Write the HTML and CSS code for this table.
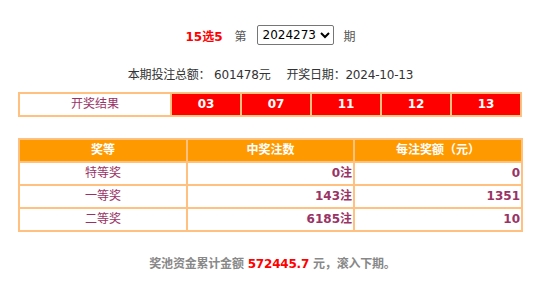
FILE: index.html
```html
<!DOCTYPE html>
<html>
<head>
<meta charset="utf-8">
<link rel="stylesheet" href="styles.css">
</head>
<body>
<div class="page">
  <div class="head">
    <span class="lot">15选5</span>
    <span class="di">第</span>
    <select class="issue"><option>2024273</option></select>
    <span class="di">期</span>
  </div>
  <div class="info">
    <span>本期投注总额： 601478元</span>
    <span>开奖日期：2024-10-13</span>
  </div>
  <div class="draw">
    <div class="label">开奖结果</div>
    <div class="ball">03</div>
    <div class="ball">07</div>
    <div class="ball">11</div>
    <div class="ball">12</div>
    <div class="ball">13</div>
  </div>
  <div class="prize">
    <div class="th">奖等</div>
    <div class="th">中奖注数</div>
    <div class="th">每注奖额（元）</div>
    <div class="td c">特等奖</div>
    <div class="td r">0注</div>
    <div class="td r">0</div>
    <div class="td c">一等奖</div>
    <div class="td r">143注</div>
    <div class="td r">1351</div>
    <div class="td c">二等奖</div>
    <div class="td r">6185注</div>
    <div class="td r">10</div>
  </div>
  <div class="pool">奖池资金累计金额 <span class="amt">572445.7</span> 元，滚入下期。</div>
</div>
</body>
</html>
```
FILE: styles.css
```css
html, body {
  margin: 0;
  padding: 0;
  background: #fff;
}
body {
  font-family: "DejaVu Sans", "Noto Sans CJK SC", sans-serif;
  font-size: 12px;
  color: #333;
}
.page {
  padding: 0 0 0 18px;
  width: 505px;
}
.head {
  display: flex;
  justify-content: center;
  align-items: center;
  gap: 8px;
  height: 20px;
  margin-top: 25px;
}
.lot {
  color: #ff0000;
  font-weight: bold;
  font-size: 12px;
  margin-right: 4px;
}
.di {
  color: #555;
}
.issue {
  font-family: "DejaVu Sans", sans-serif;
  font-size: 12px;
  color: #000;
  height: 20px;
  padding: 0 0 0 1px;
  border: 1px solid #767676;
  border-radius: 2px;
  background: #fff;
  margin: 0 2px;
}
.info {
  display: flex;
  justify-content: center;
  gap: 16px;
  margin-top: 22px;
  height: 16px;
  line-height: 16px;
  letter-spacing: -0.2px;
}
.draw {
  margin-top: 9px;
  display: grid;
  grid-template-columns: 150px repeat(5, 68px);
  grid-auto-rows: 21px;
  gap: 2px;
  padding: 2px;
  background: #ffc080;
  width: 500px;
}
.label {
  background: #fff;
  color: #993366;
  text-align: center;
  line-height: 21px;
}
.ball {
  background: #ff0000;
  color: #fff;
  font-weight: bold;
  text-align: center;
  line-height: 21px;
}
.prize {
  margin-top: 21px;
  display: grid;
  grid-template-columns: 166px 165px 166px;
  grid-auto-rows: 21px;
  gap: 2px;
  padding: 2px;
  background: #ffc080;
  width: 501px;
}
.th {
  background: #ff9900;
  color: #fff;
  font-weight: bold;
  text-align: center;
  line-height: 21px;
}
.td {
  background: #fff;
  color: #993366;
  line-height: 21px;
}
.td.c {
  text-align: center;
}
.td.r {
  text-align: right;
  font-weight: bold;
  padding-right: 1px;
}
.pool {
  margin-top: 24px;
  text-align: center;
  color: #888;
  font-weight: bold;
  height: 16px;
  line-height: 16px;
  padding-left: 4px;
  letter-spacing: -0.2px;
}
.amt {
  color: #ff0000;
  font-size: 12px;
}
```
